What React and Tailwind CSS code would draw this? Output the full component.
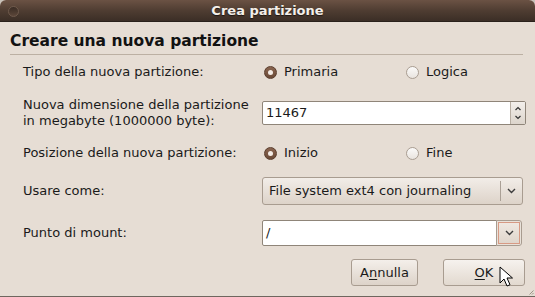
import { memo } from 'react';

const font = { fontFamily: '"DejaVu Sans", "Liberation Sans", sans-serif' };

function Radio({ checked, label }) {
    return (
        <div className="flex items-center gap-[7px]">
            {checked ? (
                <span className="w-[13px] h-[13px] rounded-full bg-gradient-to-b from-[#8a6550] to-[#6b4a37] border border-[#5a3d2d] flex items-center justify-center">
                    <span className="w-[5px] h-[5px] rounded-full bg-[#f4ece6]" />
                </span>
            ) : (
                <span className="w-[13px] h-[13px] rounded-full bg-gradient-to-b from-[#fbfaf9] to-[#e9e4df] border border-[#a99d92]" />
            )}
            <span>{label}</span>
        </div>
    );
}

function Chevron({ className }) {
    return (
        <svg className={className} width="9" height="6" viewBox="0 0 9 6" fill="none" stroke="#3c3c3c" strokeWidth="1.4">
            <path d="M1 1l3.5 3.5L8 1" />
        </svg>
    );
}

function Row({ label, children, className }) {
    return (
        <div className={`flex items-center ${className}`}>
            <div className="w-[262px] shrink-0 pl-[23px] leading-[16px] whitespace-nowrap">{label}</div>
            <div className="flex-1 flex items-center">{children}</div>
        </div>
    );
}

function CreatePartition() {
    return (
        <div className="w-[535px] h-[297px] bg-[#c9c2ba] text-[13px] text-[#1a1a1a]" style={font}>
            <div className="relative w-full h-full rounded-t-[6px] overflow-hidden flex flex-col bg-[#e6ddd4] border-b border-[#6e665e]">
                {/* title bar */}
                <div className="relative h-[22px] flex items-center justify-center bg-gradient-to-b from-[#6b5244] via-[#4f3d32] to-[#3b2e26] border-b border-[#2a211b] shrink-0">
                    <span className="absolute left-[8px] top-[6px] w-[11px] h-[11px] rounded-full bg-gradient-to-b from-[#3a2c24] to-[#5b4639] border border-[#6f5a4c]" />
                    <span className="font-bold text-[#f4efea] text-[13px] [text-shadow:0_1px_1px_#1d1511]">Crea partizione</span>
                </div>

                {/* header */}
                <div className="px-[10px] pt-[9px]">
                    <div className="font-bold text-[15.5px] leading-[20px] text-[#121212]">Creare una nuova partizione</div>
                    <div className="mt-[3px] h-px bg-[#bcb0a3] mr-[2px]" />
                </div>

                <Row label="Tipo della nuova partizione:" className="h-[20px] mt-[7px]">
                    <div className="w-[144px] pl-[2px]"><Radio checked label="Primaria" /></div>
                    <Radio label="Logica" />
                </Row>

                <Row label={<>Nuova dimensione della partizione<br />in megabyte (1000000 byte):</>} className="h-[32px] mt-[15px]">
                    <div className="w-[264px] h-[24px] flex bg-white border border-[#8f8579] rounded-[2px] overflow-hidden">
                        <div className="flex-1 pl-[3px] flex items-center">11467</div>
                        <div className="w-[15px] flex flex-col items-center justify-center bg-gradient-to-b from-[#f3efeb] to-[#ddd5cc] border-l border-[#b8aea3]">
                            <svg width="8" height="16" viewBox="0 0 8 16" fill="none" stroke="#333" strokeWidth="1.2">
                                <path d="M1.5 5l2.5-2.5L6.5 5" />
                                <path d="M1.5 11l2.5 2.5L6.5 11" />
                            </svg>
                        </div>
                    </div>
                </Row>

                <Row label="Posizione della nuova partizione:" className="h-[20px] mt-[14px]">
                    <div className="w-[144px] pl-[2px]"><Radio checked label="Inizio" /></div>
                    <Radio label="Fine" />
                </Row>

                <Row label="Usare come:" className="h-[28px] mt-[14px]">
                    <div className="w-[261px] h-[28px] flex items-center rounded-[3px] border border-[#a89c90] bg-gradient-to-b from-[#f2ede8] to-[#ddd3c9]">
                        <span className="flex-1 pl-[6px]">File system ext4 con journaling</span>
                        <span className="w-px h-[20px] bg-[#aaa096]" />
                        <span className="w-[21px] flex justify-center"><Chevron /></span>
                    </div>
                </Row>

                <Row label="Punto di mount:" className="h-[26px] mt-[15px]">
                    <div className="w-[235px] h-[26px] flex items-center bg-white border border-[#8f8579] rounded-l-[2px] pl-[3px]">/</div>
                    <div className="w-[26px] h-[26px] flex items-center justify-center rounded-r-[3px] border border-[#a89c90] bg-[#e9e2da] -ml-px">
                        <div className="w-[22px] h-[22px] flex items-center justify-center border border-[#d79a84] bg-gradient-to-b from-[#efe8e1] to-[#e0d6cc]">
                            <Chevron />
                        </div>
                    </div>
                </Row>

                <div className="flex justify-end gap-[25px] pr-[10px] mt-[13px]">
                    <button className="w-[67px] h-[27px] rounded-[3px] border border-[#a89c90] bg-gradient-to-b from-[#f4efea] to-[#ddd3c9]">
                        A<span className="underline underline-offset-2">n</span>nulla
                    </button>
                    <button className="relative w-[82px] h-[27px] rounded-[3px] border border-[#a89c90] bg-gradient-to-b from-[#f6f2ee] to-[#e2d9cf]">
                        <span className="underline underline-offset-2">O</span>K
                        <svg className="absolute left-[55px] top-[6px]" width="14" height="22" viewBox="0 0 14 22">
                            <path d="M1 1v16l4-4 3 7 3-1.3-3-6.7h5.5z" fill="#fff" stroke="#000" strokeWidth="1" strokeLinejoin="round" />
                        </svg>
                    </button>
                </div>

                {/* resize grip */}
                <svg className="absolute right-[1px] bottom-[1px]" width="6" height="6" viewBox="0 0 6 6" stroke="#9d9287" strokeWidth="1">
                    <path d="M5.5 1.5L1.5 5.5M5.5 4L4 5.5" />
                </svg>
            </div>
        </div>
    );
}

export default memo(CreatePartition);
